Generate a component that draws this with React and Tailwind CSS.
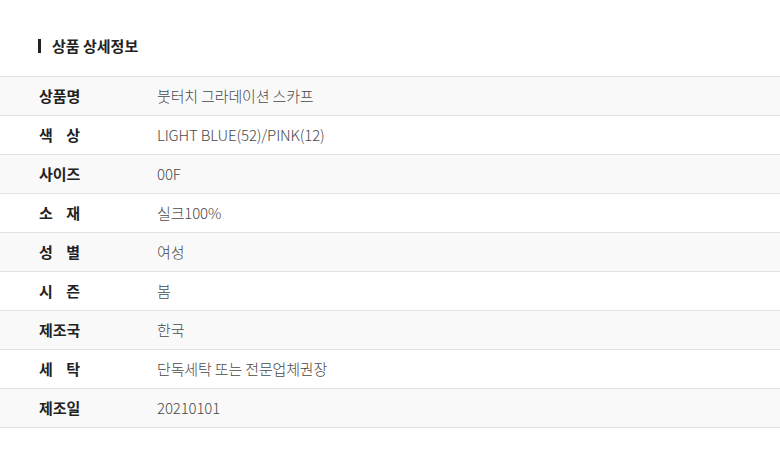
const ROWS = [
  ['상품명', '붓터치 그라데이션 스카프'],
  ['색상', 'LIGHT BLUE(52)/PINK(12)'],
  ['사이즈', '00F'],
  ['소재', '실크100%'],
  ['성별', '여성'],
  ['시즌', '봄'],
  ['제조국', '한국'],
  ['세탁', '단독세탁 또는 전문업체권장'],
  ['제조일', '20210101'],
]

function Label({ text }) {
  if (text.length === 2) {
    return (
      <span className="flex w-[41px] justify-between">
        <span>{text[0]}</span>
        <span>{text[1]}</span>
      </span>
    )
  }
  return <span>{text}</span>
}

export default function App() {
  return (
    <div
      className="h-[466px] w-[780px] bg-white"
      style={{ fontFamily: '"Noto Sans CJK KR", "Noto Sans", sans-serif' }}
    >
      <div className="flex h-[76px] items-start pl-[38px] pt-[36px]">
        <div className="flex items-center">
          <span className="mr-[11px] h-[14px] w-[3px] bg-[#222]" />
          <h2 className="text-[15px] font-bold leading-[20px] text-[#222]">상품 상세정보</h2>
        </div>
      </div>

      <div className="border-t border-[#e2e2e2]">
        {ROWS.map(([label, value], idx) => (
          <div
            key={label}
            className={`flex h-[39px] items-center border-b border-[#e2e2e2] ${idx % 2 === 0 ? 'bg-[#f9f9f9]' : 'bg-white'}`}
          >
            <div className="w-[157px] pl-[39px] text-[15px] font-bold text-[#222]">
              <Label text={label} />
            </div>
            <div className="text-[15px] font-light tracking-[-0.15px] text-[#4a4a4a]">{value}</div>
          </div>
        ))}
      </div>
    </div>
  )
}
